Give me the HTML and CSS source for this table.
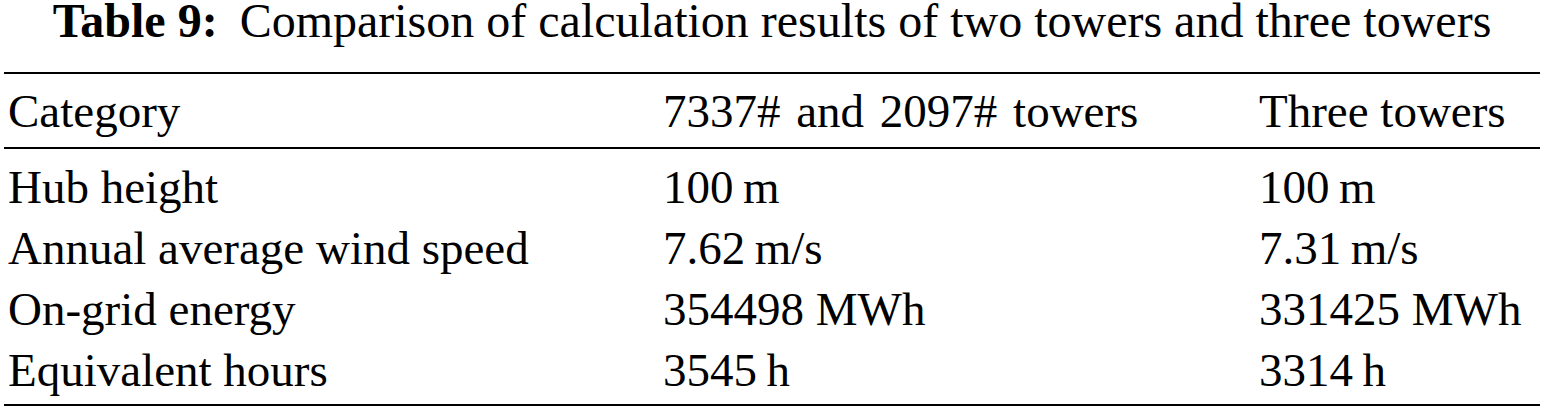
FILE: index.html
```html
<!DOCTYPE html>
<html lang="en">
<head>
    <meta charset="UTF-8">
    <title>Table 9</title>
    <link rel="stylesheet" href="styles.css">
</head>
<body>
    <div class="wrap">
        <p class="caption"><span class="label">Table 9:</span>Comparison of calculation results of two towers and three towers</p>
        <table class="results">
            <thead>
                <tr>
                    <th class="col-cat">Category</th>
                    <th class="col-two">7337# and 2097# towers</th>
                    <th class="col-three">Three towers</th>
                </tr>
            </thead>
            <tbody>
                <tr>
                    <td>Hub height</td>
                    <td>100&thinsp;m</td>
                    <td>100&thinsp;m</td>
                </tr>
                <tr>
                    <td>Annual average wind speed</td>
                    <td>7.62&thinsp;m/s</td>
                    <td>7.31&thinsp;m/s</td>
                </tr>
                <tr>
                    <td>On-grid energy</td>
                    <td>354498 MWh</td>
                    <td>331425 MWh</td>
                </tr>
                <tr>
                    <td>Equivalent hours</td>
                    <td>3545&thinsp;h</td>
                    <td>3314&thinsp;h</td>
                </tr>
            </tbody>
        </table>
    </div>
</body>
</html>
```

FILE: styles.css
```css
body {
    margin: 0;
    padding: 0;
    background: #fff;
    color: #000;
    font-family: "Liberation Serif", "Times New Roman", serif;
    font-size: 47px;
}
.wrap {
    width: 1536px;
    margin-left: 4px;
}
.caption {
    margin: 0 0 30px;
    font-size: 48px;
    line-height: 42px;
    text-align: center;
}
.caption .label {
    font-weight: bold;
    margin-right: 22px;
}
.results {
    width: 1536px;
    border-collapse: collapse;
    border-top: 2px solid #000;
    border-bottom: 2px solid #000;
}
.results th,
.results td {
    padding: 0 4px;
    line-height: 61px;
    text-align: left;
    font-weight: normal;
    white-space: nowrap;
}
.results thead th {
    padding-top: 7px;
    padding-bottom: 5px;
    border-bottom: 2px solid #000;
}
.results thead .col-two {
    word-spacing: 4px;
}
.results tbody tr:first-child td {
    padding-top: 8px;
}
.results tbody tr:last-child td {
    padding-bottom: 3px;
}
.col-cat {
    width: 647px;
}
.col-two {
    width: 588px;
}
```
